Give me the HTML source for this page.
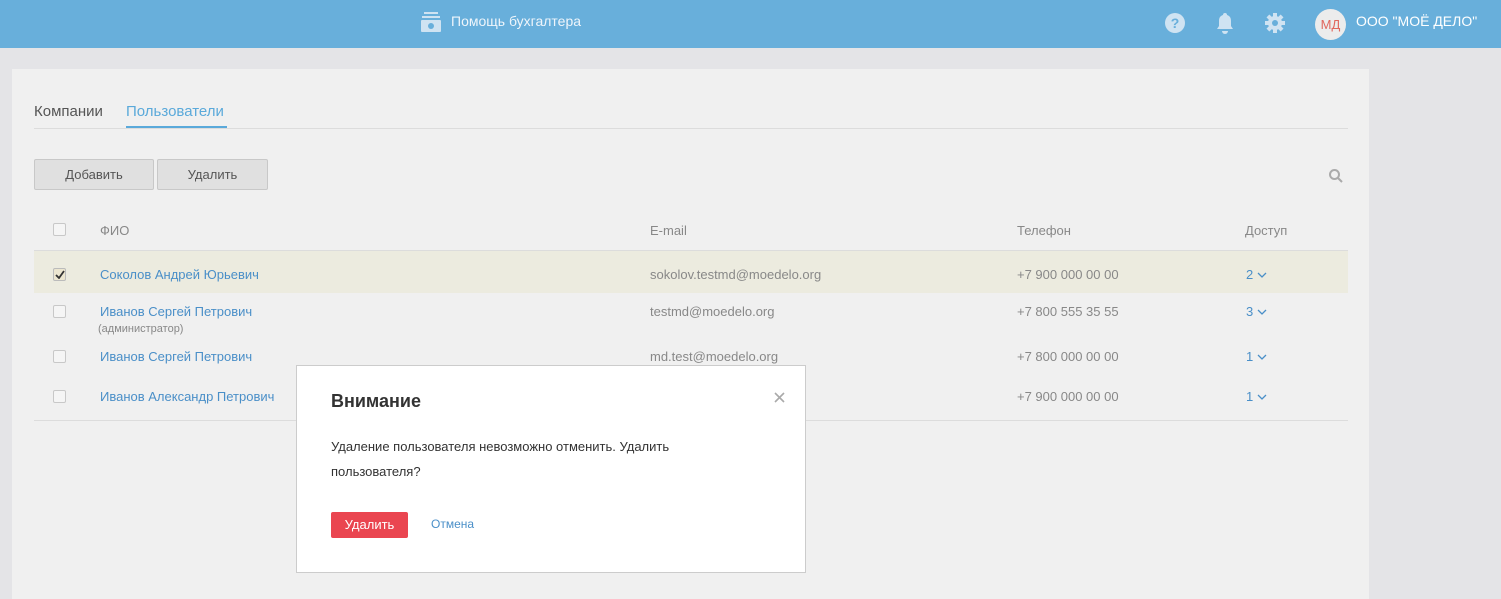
<!DOCTYPE html>
<html><head><meta charset="utf-8"><style>
*{box-sizing:border-box;margin:0;padding:0}
body{width:1501px;height:588px;overflow:hidden;background:#e4e4e7;font-family:"Liberation Sans",sans-serif;position:relative;font-size:13px}
.hdr{position:absolute;left:0;top:0;width:1501px;height:48px;background:#68afdb}
.abs{position:absolute}
.card{position:absolute;left:12px;top:69px;width:1357px;height:530px;background:#f0f0f0}
.btn{position:absolute;top:159px;height:31px;background:#e0e0e0;border:1px solid #c8c8c8;border-radius:2px;color:#555;text-align:center;line-height:29px;font-size:13px}
.cb{position:absolute;left:53px;width:13px;height:13px;border:1px solid #c8c8c8;border-radius:2px;background:#f5f5f5}
.t{position:absolute;font-size:13px;white-space:nowrap}
.lnk{color:#4a8fc8}.gr{color:#888}
.chev{position:absolute;width:10px;height:6px}
</style></head><body>
<div class="hdr"></div>
<svg class="abs" style="left:420px;top:12px" width="22" height="22" viewBox="0 0 22 22" fill="#cfe3f2"><rect x="4" y="0" width="14" height="2"/><rect x="2" y="4" width="18" height="2"/><rect x="1" y="8" width="20" height="12" rx="1"/><circle cx="11" cy="14" r="3" fill="#68afdb"/></svg>
<div class="t" style="left:451px;top:13px;color:#eef5fb;font-size:14px">Помощь бухгалтера</div>
<svg class="abs" style="left:1164px;top:12px" width="22" height="22" viewBox="0 0 22 22"><circle cx="11" cy="11" r="10" fill="#cfe3f2"/><text x="11" y="16" text-anchor="middle" font-family="Liberation Sans" font-weight="bold" font-size="14" fill="#68afdb">?</text></svg>
<svg class="abs" style="left:1215px;top:12px" width="20" height="22" viewBox="0 0 20 22" fill="#cfe3f2"><path d="M10 1a2 2 0 0 1 2 2c3 1 4 3 4 6v5l2 3H2l2-3V9c0-3 1-5 4-6a2 2 0 0 1 2-2z"/><path d="M7 19h6a3 3 0 0 1-6 0z"/></svg>
<svg class="abs" style="left:1264px;top:12px" width="22" height="22" viewBox="0 0 22 22"><g fill="#cfe3f2"><circle cx="11" cy="11" r="7"/><g id="tt"><rect x="9" y="1" width="4" height="20"/></g><use href="#tt" transform="rotate(45 11 11)"/><use href="#tt" transform="rotate(90 11 11)"/><use href="#tt" transform="rotate(135 11 11)"/></g><circle cx="11" cy="11" r="3" fill="#68afdb"/></svg>
<div class="abs" style="left:1315px;top:9px;width:31px;height:31px;border-radius:50%;background:#ececec;color:#e0675e;font-size:13px;text-align:center;line-height:31px">МД</div>
<div class="t" style="left:1356px;top:13px;color:#fff;font-size:14px">ООО "МОЁ ДЕЛО"</div>

<div class="card"></div>
<div class="t" style="left:34px;top:103px;color:#555;font-size:15px">Компании</div>
<div class="t" style="left:126px;top:103px;color:#5aa9da;font-size:15px">Пользователи</div>
<div class="abs" style="left:34px;top:128px;width:1314px;height:1px;background:#dcdcdc"></div>
<div class="abs" style="left:126px;top:126px;width:101px;height:2px;background:#5aa9da"></div>
<div class="btn" style="left:34px;width:120px">Добавить</div>
<div class="btn" style="left:157px;width:111px">Удалить</div>
<svg class="abs" style="left:1328px;top:168px" width="16" height="16" viewBox="0 0 16 16"><circle cx="6.5" cy="6.5" r="4.5" fill="none" stroke="#aaa" stroke-width="2"/><path d="M10 10l4 4" stroke="#aaa" stroke-width="2"/></svg>

<div class="cb" style="top:223px"></div>
<div class="t gr" style="left:100px;top:223px">ФИО</div>
<div class="t gr" style="left:650px;top:223px">E-mail</div>
<div class="t gr" style="left:1017px;top:223px">Телефон</div>
<div class="t gr" style="left:1245px;top:223px">Доступ</div>
<div class="abs" style="left:34px;top:250px;width:1314px;height:1px;background:#dcdcdc"></div>

<div class="abs" style="left:34px;top:251px;width:1314px;height:42px;background:#ecebdf"></div>
<div class="cb" style="top:268px;background:#ece6d0;border-color:#bbb"></div>
<svg class="abs" style="left:55px;top:270px" width="10" height="9" viewBox="0 0 10 9"><path d="M1 5l3 3 5-7" fill="none" stroke="#333" stroke-width="1.8"/></svg>
<div class="t lnk" style="left:100px;top:267px">Соколов Андрей Юрьевич</div>
<div class="t gr" style="left:650px;top:267px">sokolov.testmd@moedelo.org</div>
<div class="t gr" style="left:1017px;top:267px">+7 900 000 00 00</div>
<div class="t lnk" style="left:1246px;top:267px">2</div>
<svg class="chev" style="left:1257px;top:272px" viewBox="0 0 10 6"><path d="M1 1l4 4 4-4" fill="none" stroke="#4a8fc8" stroke-width="1.3"/></svg>

<div class="cb" style="top:305px"></div>
<div class="t lnk" style="left:100px;top:304px">Иванов Сергей Петрович</div>
<div class="t gr" style="left:98px;top:323px;font-size:11px">(администратор)</div>
<div class="t gr" style="left:650px;top:304px">testmd@moedelo.org</div>
<div class="t gr" style="left:1017px;top:304px">+7 800 555 35 55</div>
<div class="t lnk" style="left:1246px;top:304px">3</div>
<svg class="chev" style="left:1257px;top:309px" viewBox="0 0 10 6"><path d="M1 1l4 4 4-4" fill="none" stroke="#4a8fc8" stroke-width="1.3"/></svg>

<div class="cb" style="top:350px"></div>
<div class="t lnk" style="left:100px;top:349px">Иванов Сергей Петрович</div>
<div class="t gr" style="left:650px;top:349px">md.test@moedelo.org</div>
<div class="t gr" style="left:1017px;top:349px">+7 800 000 00 00</div>
<div class="t lnk" style="left:1246px;top:349px">1</div>
<svg class="chev" style="left:1257px;top:354px" viewBox="0 0 10 6"><path d="M1 1l4 4 4-4" fill="none" stroke="#4a8fc8" stroke-width="1.3"/></svg>

<div class="cb" style="top:390px"></div>
<div class="t lnk" style="left:100px;top:389px">Иванов Александр Петрович</div>
<div class="t gr" style="left:1017px;top:389px">+7 900 000 00 00</div>
<div class="t lnk" style="left:1246px;top:389px">1</div>
<svg class="chev" style="left:1257px;top:394px" viewBox="0 0 10 6"><path d="M1 1l4 4 4-4" fill="none" stroke="#4a8fc8" stroke-width="1.3"/></svg>
<div class="abs" style="left:34px;top:420px;width:1314px;height:1px;background:#dcdcdc"></div>

<div class="abs" style="left:296px;top:365px;width:510px;height:208px;background:#fff;border:1px solid #ccc"></div>
<div class="t" style="left:331px;top:391px;font-size:18px;font-weight:bold;color:#333">Внимание</div>
<svg class="abs" style="left:774px;top:392px" width="11" height="11" viewBox="0 0 11 11"><path d="M1 1l9 9M10 1l-9 9" stroke="#aaa" stroke-width="1.6"/></svg>
<div class="t" style="left:331px;top:434px;color:#333;line-height:25px">Удаление пользователя невозможно отменить. Удалить<br>пользователя?</div>
<div class="abs" style="left:331px;top:512px;width:77px;height:26px;background:#ea4550;border-radius:2px;color:#fff;text-align:center;line-height:26px;font-size:13px">Удалить</div>
<div class="t" style="left:431px;top:517px;color:#4a8fc8;font-size:12px">Отмена</div>
</body></html>
